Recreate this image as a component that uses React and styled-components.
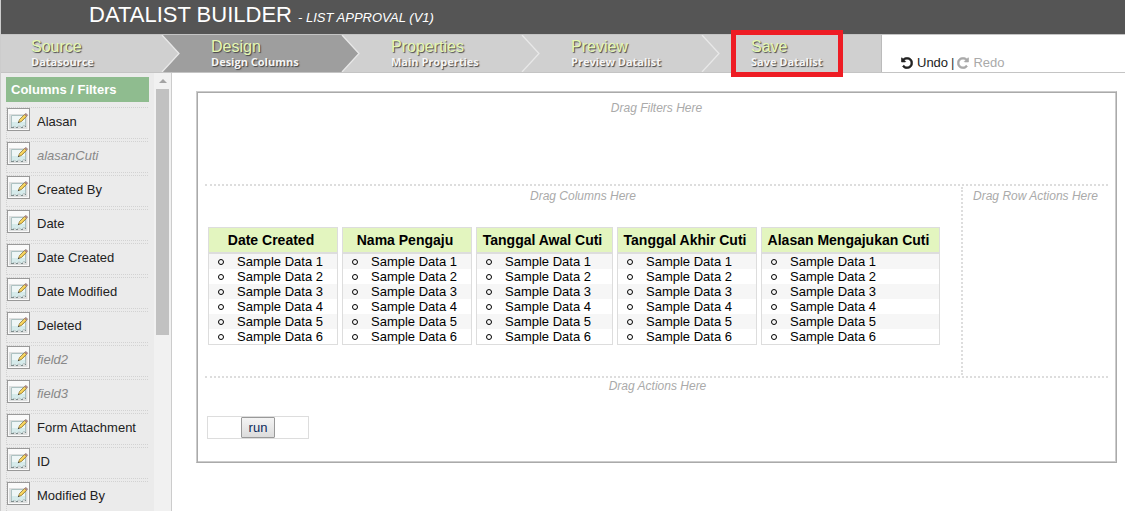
import React from "react";
import styled, { createGlobalStyle, css } from "styled-components";

const Global = createGlobalStyle`
  *, *::before, *::after { box-sizing: border-box; }
  html, body, #root { height: 100%; }
  body {
    margin: 0;
    background: #fff;
    color: #000;
    font: 13px/15px "Liberation Sans", Arial, sans-serif;
    overflow: hidden;
  }
`;

const Page = styled.div`
  display: flex;
  flex-direction: column;
  height: 100%;
  border-left: 1px solid #ccc;
`;

const Header = styled.header`
  display: flex;
  align-items: center;
  height: 34px;
  flex: none;
  padding: 0 88px 2px;
  background: #555;
`;

const Title = styled.h1`
  margin: 0;
  font-size: 22px;
  line-height: 26px;
  font-weight: 400;
  color: #fff;
`;

const Subtitle = styled.small`
  font-size: 13px;
  font-style: italic;
`;

const Nav = styled.nav`
  display: flex;
  flex: none;
  height: 39px;
  border-top: 1px solid #c4c4c4;
  border-bottom: 1px solid #c4c4c4;
`;

const Steps = styled.ol`
  display: flex;
  margin: 0;
  padding: 0;
  list-style: none;
  border-right: 1px solid #bbb;
`;

const Step = styled.li`
  position: relative;
  width: 180px;
  background: ${(p) => (p.$active ? "#9e9e9e" : "#d0d0d0")};
  &:last-child { width: 160px; }
`;

const StepLink = styled.a`
  display: block;
  padding: 3px 0 0 30px;
  text-decoration: none;
  text-shadow: 1px 1px 1px #444;
`;

const StepName = styled.span`
  display: block;
  font-size: 16px;
  line-height: 17px;
  color: #e6f8b2;
`;

const StepHint = styled.span`
  display: block;
  font: 700 11px/14px "Open Sans", sans-serif;
  color: #f6f6f6;
`;

const Arrow = styled.svg`
  position: absolute;
  right: 0;
  top: 0;
`;

const Highlight = styled.span`
  position: absolute;
  z-index: 1;
  left: 10px;
  top: -5px;
  width: 112px;
  height: 47px;
  border: 5px solid #ee1c24;
  pointer-events: none;
`;

const History = styled.div`
  display: flex;
  align-items: flex-end;
  gap: 3px;
  padding: 0 0 1px 19px;
  line-height: 16px;
  color: #333;
`;

const HistoryButton = styled.button`
  display: flex;
  align-items: center;
  gap: 4px;
  padding: 0;
  border: 0;
  background: none;
  font: inherit;
  color: #222;
  &:disabled { color: #aaa; }
`;

const Body = styled.div`
  display: flex;
  flex: 1;
  min-height: 0;
`;

const Sidebar = styled.aside`
  display: flex;
  flex: none;
  width: 171px;
  overflow: hidden;
  background: #ebebeb;
  border-right: 1px solid #ccc;
`;

const Palette = styled.div`
  flex: 1;
  padding: 4px 5px;
`;

const PaletteTitle = styled.h2`
  margin: 0 0 5px;
  padding: 5px;
  font-size: 13px;
  line-height: 15px;
  color: #fff;
  background: #8fbc8f;
`;

const PaletteList = styled.ul`
  display: flex;
  flex-direction: column;
  gap: 2px;
  margin: 0;
  padding: 0 1px 0 0;
  list-style: none;
`;

const PaletteItem = styled.li`
  display: flex;
  align-items: flex-start;
  gap: 7px;
  height: 32px;
  border: 1px dotted #d2d2d2;
  border-right: 0;
  line-height: 28px;
  color: #222;
  ${(p) => p.$hidden && css`
    color: #888;
    font-style: italic;
  `}
`;

const EditButton = styled.button`
  width: 23px;
  height: 23px;
  padding: 0;
  border: 1px solid #999;
  background: #fafafa;
  svg { display: block; }
`;

const Scrollbar = styled.div`
  display: flex;
  flex-direction: column;
  align-items: center;
  width: 17px;
  background: #f1f1f1;
`;

const ScrollUp = styled.span`
  margin: 6px 0 6px;
  border: 4px solid transparent;
  border-top: 0;
  border-bottom-color: #a3a3a3;
`;

const Thumb = styled.span`
  width: 13px;
  height: 246px;
  background: #c1c1c1;
`;

const Main = styled.main`
  flex: 1;
  min-width: 0;
  padding: 18px 8px 0 24px;
`;

const Canvas = styled.section`
  padding: 8px;
  border: 1px solid;
  border-color: #ccc #aaa #aaa #ccc;
  box-shadow: inset 1px 1px #aaa, inset -1px -1px #ccc;
`;

const Hint = styled.p`
  margin: 0;
  font-size: 12px;
  line-height: 16px;
  font-style: italic;
  text-align: center;
  color: #aaa;
`;

const FilterZone = styled.div`
  height: 84px;
`;

const ColumnsZone = styled.div`
  display: flex;
  height: 194px;
  border-top: 2px dotted #ddd;
  border-bottom: 2px dotted #ddd;
`;

const ColumnArea = styled.div`
  flex: 1;
  min-width: 0;
  padding: 2px 3px;
`;

const RowActionArea = styled.div`
  width: 147px;
  margin: 1px 0;
  padding-top: 1px;
  border-left: 2px dotted #ddd;
`;

const ActionZone = styled.div`
  height: 76px;
  padding-left: 2px;
`;

const ColumnList = styled.div`
  display: flex;
  gap: 4px;
  margin-top: 23px;
`;

const Column = styled.article`
  flex: none;
  width: ${(p) => p.$width}px;
  border: 1px solid #ddd;
`;

const ColumnTitle = styled.h3`
  margin: 0;
  padding: 4px 4px 4px 0;
  border-bottom: 2px solid #ddd;
  font-size: 14px;
  line-height: 16px;
  text-align: center;
  white-space: nowrap;
  background: #e3f5bf;
`;

const Samples = styled.ul`
  margin: 0;
  padding: 0;
  list-style: none;
`;

const Sample = styled.li`
  display: flex;
  align-items: center;
  gap: 13px;
  padding-left: 9px;
  height: 15px;
  &:nth-child(odd) { background: #f6f6f6; }
  &::before {
    content: "";
    width: 6px;
    height: 6px;
    border: 1px solid #000;
    border-radius: 50%;
  }
`;

const ActionSlot = styled.div`
  display: flex;
  justify-content: center;
  width: 102px;
  margin-top: 22px;
  border: 1px solid #ddd;
`;

const RunButton = styled.button`
  width: 34px;
  height: 21px;
  padding: 0;
  border: 1px solid #999;
  border-radius: 1px;
  font: 13px/15px "Liberation Sans", Arial, sans-serif;
  color: #0a2a5c;
  background: linear-gradient(#f4f4f4, #dcdcdc);
`;

const STEPS = [
  ["Source", "Datasource"],
  ["Design", "Design Columns"],
  ["Properties", "Main Properties"],
  ["Preview", "Preview Datalist"],
  ["Save", "Save Datalist"],
];
const ACTIVE = 1;

const FIELDS = [
  { name: "Alasan" },
  { name: "alasanCuti", hidden: true },
  { name: "Created By" },
  { name: "Date" },
  { name: "Date Created" },
  { name: "Date Modified" },
  { name: "Deleted" },
  { name: "field2", hidden: true },
  { name: "field3", hidden: true },
  { name: "Form Attachment" },
  { name: "ID" },
  { name: "Modified By" },
];

const COLUMNS = [
  { label: "Date Created", width: 130 },
  { label: "Nama Pengaju", width: 130 },
  { label: "Tanggal Awal Cuti", width: 137 },
  { label: "Tanggal Akhir Cuti", width: 140 },
  { label: "Alasan Mengajukan Cuti", width: 179 },
];

const GREY = "#d0d0d0";
const DARK = "#9e9e9e";

function StepArrow({ left, right }) {
  return (
    <Arrow width="20" height="37" viewBox="0 0 20 37" aria-hidden="true">
      <rect width="20" height="37" fill={right} />
      <path d="M0 0H1L18 18.500L1 37H0Z" fill={left} />
      <path d="M1 0L18 18.500L1 37" fill="none" stroke="#e8e8e8" strokeWidth="1.300" />
    </Arrow>
  );
}

function EditIcon() {
  return (
    <svg width="21" height="21" viewBox="0 0 21 21" aria-hidden="true">
      <rect x="1" y="5" width="18.500" height="15" fill="#dcdede" />
      <path d="M3.500 6.500H17.500V17.500L15.500 16L13.500 18.500L11 16.500L8.500 18.500L6.500 17L3.500 18.500Z" fill="#eef6f6" stroke="#adc2c2" />
      <path d="M4 13H17V16L15.500 15.500L13.500 18L11 16L8.500 18L6.500 16.500L4 18Z" fill="#d6ebeb" />
      <path d="M3 18.500h3M8 18.500h2M13 18.500h2M17 17.500h1" stroke="#7f8c8c" />
      <path d="M10.500 13.500L11.500 10.500L16.500 5.500L18.500 7.500L13.500 12.500Z" fill="#f0c848" stroke="#8f7840" strokeWidth="0.800" />
      <path d="M12 11.500L17 6.500" stroke="#f9e48c" strokeWidth="0.900" />
      <path d="M16.500 5.500L17.800 4.200L19.800 6.200L18.500 7.500Z" fill="#b9867c" stroke="#888" strokeWidth="0.500" />
      <path d="M9.800 14.200L10.600 12.500L11.500 13.400Z" fill="#333" />
    </svg>
  );
}

function TurnIcon({ flip }) {
  return (
    <svg width="12" height="12" viewBox="88 88 1616 1616" fill="currentColor" stroke="currentColor" strokeWidth="70" aria-hidden="true">
      <path
        transform={flip ? "matrix(-1 0 0 1 1792 0)" : undefined}
        d="M1664 896q0 156-61 298t-164 245-245 164-298 61q-172 0-327-72.500t-264-204.500q-7-10-6.500-22.500t8.500-20.500l137-138q10-9 25-9 16 2 23 12 73 95 179 147t225 52q104 0 198.500-40.500t163.500-109.500 109.500-163.500 40.500-198.500-40.500-198.500-109.500-163.500-163.500-109.500-198.500-40.500q-98 0-188 35.500t-160 101.500l137 138q31 30 14 69-17 40-59 40h-448q-26 0-45-19t-19-45v-448q0-42 40-59 39-17 69 14l130 129q107-101 244.500-156.500t284.500-55.500q156 0 298 61t245 164 164 245 61 298z"
      />
    </svg>
  );
}

export default function App() {
  return (
    <Page>
      <Global />
      <Header>
        <Title>
          DATALIST BUILDER <Subtitle>- LIST APPROVAL (V1)</Subtitle>
        </Title>
      </Header>
      <Nav>
        <Steps>
          {STEPS.map(([name, hint], i) => (
            <Step key={name} $active={i === ACTIVE}>
              {i < STEPS.length - 1 && (
                <StepArrow
                  left={i === ACTIVE ? DARK : GREY}
                  right={i + 1 === ACTIVE ? DARK : GREY}
                />
              )}
              <StepLink href="#">
                <StepName>{name}</StepName>
                <StepHint>{hint}</StepHint>
              </StepLink>
              {name === "Save" && <Highlight />}
            </Step>
          ))}
        </Steps>
        <History>
          <HistoryButton><TurnIcon />Undo</HistoryButton>
          <span>|</span>
          <HistoryButton disabled><TurnIcon flip />Redo</HistoryButton>
        </History>
      </Nav>
      <Body>
        <Sidebar>
          <Palette>
            <PaletteTitle>Columns / Filters</PaletteTitle>
            <PaletteList>
              {FIELDS.map((f) => (
                <PaletteItem key={f.name} $hidden={f.hidden}>
                  <EditButton aria-label={`Edit ${f.name}`}><EditIcon /></EditButton>
                  {f.name}
                </PaletteItem>
              ))}
            </PaletteList>
          </Palette>
          <Scrollbar aria-hidden="true"><ScrollUp /><Thumb /></Scrollbar>
        </Sidebar>
        <Main>
          <Canvas>
            <FilterZone><Hint>Drag Filters Here</Hint></FilterZone>
            <ColumnsZone>
              <ColumnArea>
                <Hint>Drag Columns Here</Hint>
                <ColumnList>
                  {COLUMNS.map((c) => (
                    <Column key={c.label} $width={c.width}>
                      <ColumnTitle>{c.label}</ColumnTitle>
                      <Samples>
                        {[1, 2, 3, 4, 5, 6].map((n) => (
                          <Sample key={n}>Sample Data {n}</Sample>
                        ))}
                      </Samples>
                    </Column>
                  ))}
                </ColumnList>
              </ColumnArea>
              <RowActionArea><Hint>Drag Row Actions Here</Hint></RowActionArea>
            </ColumnsZone>
            <ActionZone>
              <Hint>Drag Actions Here</Hint>
              <ActionSlot><RunButton>run</RunButton></ActionSlot>
            </ActionZone>
          </Canvas>
        </Main>
      </Body>
    </Page>
  );
}
